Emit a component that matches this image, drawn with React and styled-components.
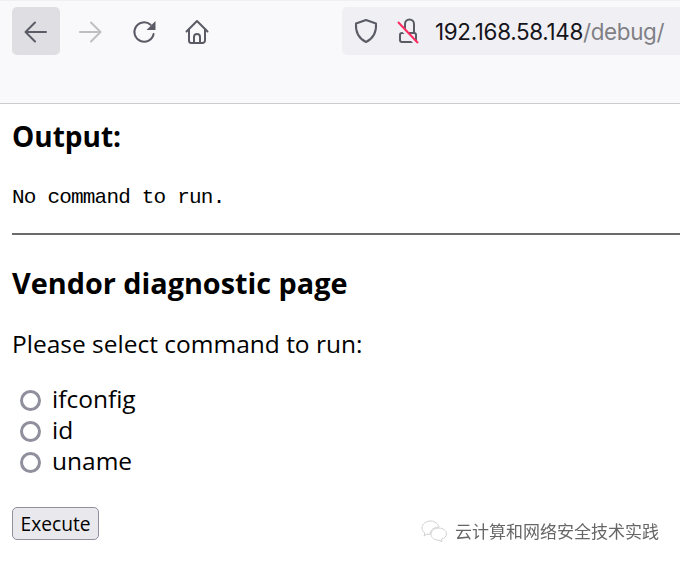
import React from 'react'
import styled, { createGlobalStyle } from 'styled-components'

const GlobalStyle = createGlobalStyle`
html, body {
    margin: 0;
    padding: 0;
    background: #fff;
}
body {
    font-family: "Open Sans", "Liberation Sans", sans-serif;
    overflow: hidden;
}
`

const Page = styled.div`
width: 680px;
height: 561px;
overflow: hidden;
`

const Chrome = styled.div`
height: 104px;
box-sizing: border-box;
background: #f9f9fb;
border-top: 1px solid #f0f0f4;
border-bottom: 1px solid #ccc;
display: flex;
align-items: flex-start;
padding: 6px 0 0 12px;
`

const NavButton = styled.button`
width: 48px;
height: 48px;
border: 0;
padding: 2px 0 0;
margin-right: ${p => p.$gap}px;
border-radius: 5px;
background: ${p => (p.$active ? '#dedee3' : 'transparent')};
color: ${p => (p.$muted ? '#bebec3' : '#5b5b66')};
display: flex;
align-items: center;
justify-content: center;
`

const UrlBar = styled.div`
margin-left: 121px;
flex: 1;
height: 48px;
background: #f0f0f4;
border-radius: 5px 0 0 5px;
display: flex;
align-items: center;
padding-left: 12px;
`

const UrlIcon = styled.span`
display: flex;
margin-right: ${p => p.$gap}px;
color: #5b5b66;
`

const UrlHost = styled.span`
font-family: "Inter", "Open Sans", sans-serif;
font-size: 22.4px;
color: #15141a;
letter-spacing: -0.33px;
`

const UrlPath = styled(UrlHost)`
color: #7f7f85;
`

const Content = styled.div`
padding: 0 0 0 12px;
position: relative;
height: 457px;
`

const Heading = styled.h2`
margin: 0;
padding-top: ${p => p.$top}px;
font-size: ${p => p.$size}px;
line-height: 36px;
font-weight: 700;
color: #000;
`

const Output = styled.pre`
margin: 32px 0 0;
font-family: "Liberation Mono", "DejaVu Sans Mono", monospace;
font-size: 21px;
line-height: 24px;
letter-spacing: -0.8px;
color: #000;
`

const Rule = styled.hr`
margin: 23px 0 0;
border: 0;
height: 2px;
background: #6b6b6b;
`

const Prompt = styled.p`
margin: 26px 0 0;
font-size: 24.5px;
line-height: 34px;
color: #000;
`

const Options = styled.div`
margin-top: 22px;
display: flex;
flex-direction: column;
`

const Option = styled.label`
height: 31px;
display: flex;
align-items: center;
font-size: 24.5px;
color: #000;
`

const Radio = styled.span`
width: 21px;
height: 21px;
box-sizing: border-box;
border: 3px solid #8f8f9d;
border-radius: 50%;
margin: 4px 11px 0 8px;
background: #fff;
`

const ExecuteButton = styled.button`
display: block;
margin-top: 31px;
width: 87px;
height: 33px;
padding: 0;
box-sizing: border-box;
font-family: "Open Sans", "Liberation Sans", sans-serif;
font-size: 19.2px;
color: #000;
background: #e9e9ed;
border: 1px solid #8f8f9d;
border-radius: 5px;
`

const Watermark = styled.div`
position: absolute;
right: 21px;
bottom: 18px;
display: flex;
align-items: center;
gap: 6px;
font-family: "Noto Sans CJK SC", sans-serif;
font-size: 17px;
line-height: 24px;
color: #666;
filter: blur(0.4px);
`

const ArrowIcon = styled.svg`
transform: ${p => (p.$flip ? 'scaleX(-1)' : 'none')};
`

const Arrow = ({ flip }) => (
  <ArrowIcon $flip={flip} width="28" height="28" viewBox="0 0 28 28" fill="none" stroke="currentColor" strokeWidth="2" strokeLinecap="round" strokeLinejoin="round">
    <path d="M4 14h20M13 4.500 3.500 14l9.500 9.500" />
  </ArrowIcon>
)

const Reload = () => (
  <svg width="26" height="26" viewBox="0 0 26 26" fill="none">
    <path d="M21.6 15a9.700 9.700 0 1 1-3-9.200" stroke="currentColor" strokeWidth="2" strokeLinecap="round" />
    <path d="M23.500 2v9h-9z" fill="currentColor" />
  </svg>
)

const Home = () => (
  <svg width="26" height="26" viewBox="0 0 26 26" fill="none" stroke="currentColor" strokeWidth="2" strokeLinejoin="round" strokeLinecap="round">
    <path d="M2.500 12.500 13 2l10.500 10.500" />
    <path d="M5 10.500v11a2.500 2.500 0 0 0 2.500 2.500h11a2.500 2.500 0 0 0 2.500-2.500v-11" />
    <path d="M10 24v-6a3 3 0 0 1 6 0v6" />
  </svg>
)

const Shield = () => (
  <svg width="24" height="26" viewBox="0 0 24 26" fill="none" stroke="currentColor" strokeWidth="2" strokeLinejoin="round">
    <path d="M12 2 22 5.500c.6 8.500-2 14.500-10 18.500C4 20 1.400 14 2 5.500z" />
  </svg>
)

const BrokenLock = () => (
  <svg width="24" height="26" viewBox="0 0 24 26" fill="none">
    <path d="M8 15V6a4.500 4.500 0 0 1 9 0v9" stroke="currentColor" strokeWidth="2" />
    <rect x="3" y="15" width="16" height="9" rx="2" stroke="currentColor" strokeWidth="2" />
    <path d="M0 6l20 21" stroke="#f0f0f4" strokeWidth="3" />
    <path d="M1 4l20 21" stroke="#ff2a5f" strokeWidth="2" />
  </svg>
)

const WeChat = () => (
  <svg width="28" height="22" viewBox="0 0 28 22" fill="none" stroke="#d0d0d0" strokeWidth="1">
    <path d="M10 1C5 1 1 4 1 8c0 2 1 4 3 5l-1 3 3-2 3 .5C9 10 13 7 18 7c-1-3-4-6-8-6z" />
    <path d="M18 8c-4.500 0-8 2.800-8 6.200s3.500 6 8 6l3 1.500-.5-2.500c3-1 5-3 5-5.200C25.500 10.800 22 8 18 8z" />
  </svg>
)

const commands = ['ifconfig', 'id', 'uname']

const App = () => {
  return (
    <Page>
      <GlobalStyle />
      <Chrome>
        <NavButton $active $gap={6}><Arrow /></NavButton>
        <NavButton $muted $gap={7}><Arrow flip /></NavButton>
        <NavButton $gap={4}><Reload /></NavButton>
        <NavButton $gap={0}><Home /></NavButton>
        <UrlBar>
          <UrlIcon $gap={19}><Shield /></UrlIcon>
          <UrlIcon $gap={14}><BrokenLock /></UrlIcon>
          <UrlHost>192.168.58.148</UrlHost>
          <UrlPath>/debug/</UrlPath>
        </UrlBar>
      </Chrome>
      <Content>
        <Heading $top={14} $size={28}>Output:</Heading>
        <Output>No command to run.</Output>
        <Rule />
        <Heading $top={30} $size={28.8}>Vendor diagnostic page</Heading>
        <Prompt>Please select command to run:</Prompt>
        <Options>
          {commands.map(c => (
            <Option key={c}><Radio />{c}</Option>
          ))}
        </Options>
        <ExecuteButton>Execute</ExecuteButton>
        <Watermark><WeChat />云计算和网络安全技术实践</Watermark>
      </Content>
    </Page>
  )
}

export default App
